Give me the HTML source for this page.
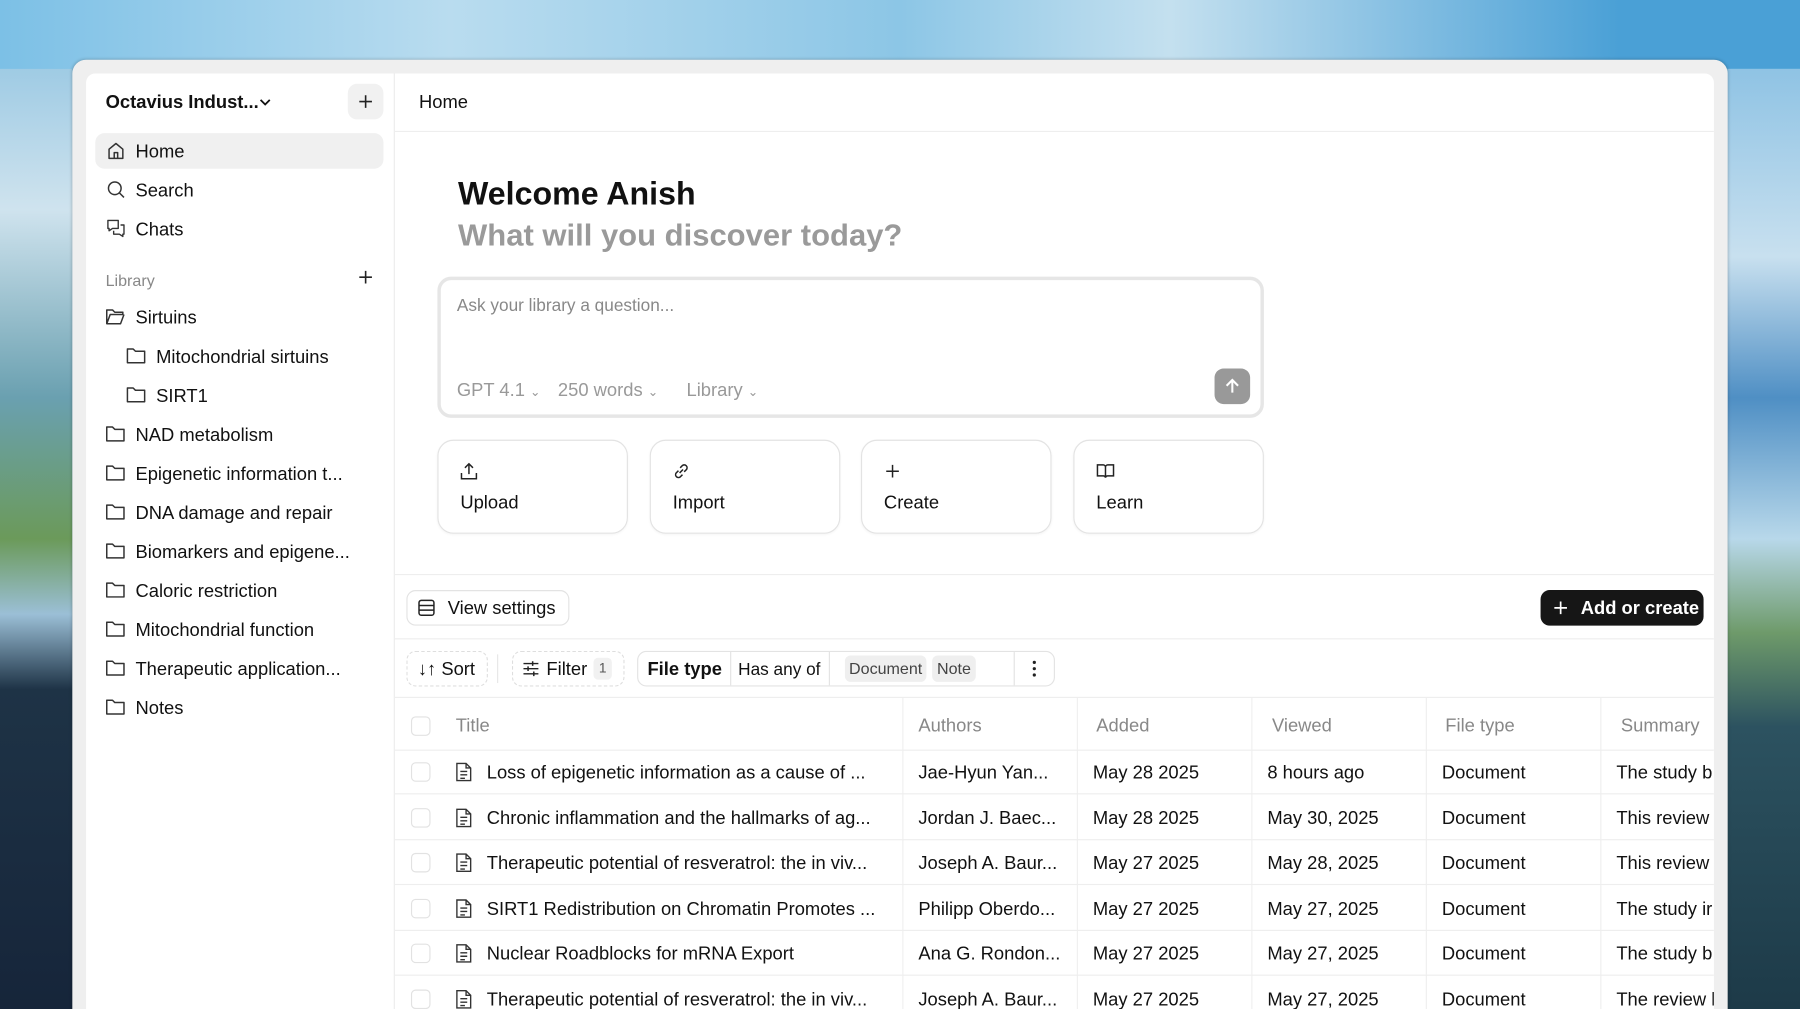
<!DOCTYPE html>
<html><head><meta charset="utf-8"><style>
*{box-sizing:border-box;margin:0;padding:0}
html,body{width:1800px;height:1009px;overflow:hidden}
body{font-family:"Liberation Sans",sans-serif;color:#111;background:#1a2c3c}
#w{position:absolute;left:0;top:0;width:1800px;height:1009px;overflow:hidden}
#s{position:absolute;left:0;top:0;width:1568px;height:879px;transform:scale(1.14796);transform-origin:0 0;overflow:hidden;
background:linear-gradient(180deg,#5aaedc 0%,#86c4e6 8%,#a9d2ea 14%,#6aa6cf 40%,#4f8fa0 55%,#2a4a5a 70%,#1a2c3c 100%);}
.bg{position:absolute}
.frame{position:absolute;left:63px;top:52px;width:1442px;height:840px;background:#efefef;border-radius:12px;box-shadow:0 0 3px rgba(0,0,0,.25)}
.app{position:absolute;left:75px;top:64px;width:1418px;height:815px;background:#fff;border-radius:8px 8px 0 0;overflow:hidden}
.side{position:absolute;left:0;top:0;width:269px;height:100%;border-right:1px solid #ececec}
.t{position:absolute;white-space:nowrap;font-size:16px;line-height:20px;margin-top:2px}
.ic{position:absolute}
svg{display:block}
.main{position:absolute;left:269px;top:0;right:0;height:100%}
.line{position:absolute;left:0;right:0;height:1px;background:#eeeeee}
.card{position:absolute;top:319px;width:166px;height:82px;border:1px solid #e3e3e3;border-radius:14px;box-shadow:0 1px 2px rgba(0,0,0,.04)}
.card .t{left:19px;top:43px}
.card .ic{left:19px;top:19px}
.cb{position:absolute;width:17px;height:17px;border:1px solid #e2e2e2;border-radius:4px}
.vl{position:absolute;top:544px;width:1px;height:300px;background:#efefef}
</style></head><body><div id="w"><div id="s">
<div class="bg" style="left:0;top:0;width:1568px;height:60px;background:linear-gradient(90deg,#7cc0e6,#b9dcef 25%,#8cc6e6 50%,#c4e0ef 65%,#4aa0d6 90%)"></div>
<div class="bg" style="left:0;top:60px;width:63px;height:819px;background:linear-gradient(180deg,#9fcbe4 0%,#cfe3ee 15%,#6aa0b0 35%,#6b9a5a 50%,#9bbfd6 58%,#1e3346 66%,#16253a 100%)"></div>
<div class="bg" style="left:1505px;top:60px;width:63px;height:819px;background:linear-gradient(180deg,#8fc3e4 0%,#c8e0ef 20%,#4f8fc4 35%,#b8d8ea 50%,#6e9a6a 60%,#2c5260 70%,#1d3a48 100%)"></div>
<div class="frame"></div>
<div class="app">
 <div class="side">
  <div class="t" style="left:17px;top:14px;font-weight:bold">Octavius Indust...</div>
  <div class="ic" style="left:151px;top:21px"><svg width="10" height="8"><path d="M1 2l4 4 4-4" stroke="#111" stroke-width="1.6" fill="none"/></svg></div>
  <div style="position:absolute;left:228px;top:9px;width:31px;height:31px;background:#f1f1f1;border-radius:8px"></div>
  <div class="ic" style="left:237px;top:18px"><svg width="13" height="13"><path d="M6.5 1v11M1 6.5h11" stroke="#222" stroke-width="1.4"/></svg></div>
  <div style="position:absolute;left:8px;top:52px;width:251px;height:31px;background:#f0f0f0;border-radius:8px"></div>
  <div class="ic" style="left:18px;top:59px"><svg width="16" height="17"><path d="M2 7l6-5 6 5v8H2z M6.5 15v-5h3v5" stroke="#333" stroke-width="1.3" fill="none" stroke-linejoin="round"/></svg></div>
  <div class="t" style="left:43px;top:57px">Home</div>
  <div class="ic" style="left:18px;top:93px"><svg width="16" height="17"><circle cx="7" cy="7" r="5.5" stroke="#333" stroke-width="1.3" fill="none"/><path d="M11 11l4 4" stroke="#333" stroke-width="1.3"/></svg></div>
  <div class="t" style="left:43px;top:91px">Search</div>
  <div class="ic" style="left:18px;top:127px"><svg width="16" height="17"><path d="M1 1h9v7H5l-3 2V8H1z M6 10v3h5l3 2v-2h1V5h-3" stroke="#333" stroke-width="1.2" fill="none" stroke-linejoin="round"/></svg></div>
  <div class="t" style="left:43px;top:125px">Chats</div>
  <div class="t" style="left:17px;top:168px;font-size:14px;color:#888">Library</div>
  <div class="ic" style="left:237px;top:171px"><svg width="13" height="13"><path d="M6.5 1v11M1 6.5h11" stroke="#222" stroke-width="1.4"/></svg></div>
  <div class="ic" style="left:17px;top:204px"><svg width="17" height="15"><path d="M1 2h5l2 2h7v2H4l-3 8z M1 14h12l3-8" stroke="#333" stroke-width="1.3" fill="none" stroke-linejoin="round"/></svg></div>
  <div class="t" style="left:43px;top:202px">Sirtuins</div>
  <div id="folders"></div>
 </div>
 <div class="main">
  <div class="t" style="left:21px;top:14px">Home</div>
  <div class="line" style="top:50px"></div>
  <div class="t" style="left:55px;top:86px;font-size:28px;line-height:34px;font-weight:bold">Welcome Anish</div>
  <div class="t" style="left:55px;top:122px;font-size:27px;line-height:34px;font-weight:bold;color:#9a9a9a">What will you discover today?</div>
  <div style="position:absolute;left:37px;top:177px;width:720px;height:123px;border:3px solid #e6e6e6;border-radius:12px"></div>
  <div class="t" style="left:54px;top:191px;font-size:15px;color:#888">Ask your library a question...</div>
  <div class="t" style="left:54px;top:265px;color:#999">GPT 4.1 <span style="font-size:11px">&#8964;</span></div>
  <div class="t" style="left:142px;top:265px;color:#999">250 words <span style="font-size:11px">&#8964;</span></div>
  <div class="t" style="left:254px;top:265px;color:#999">Library <span style="font-size:11px">&#8964;</span></div>
  <div style="position:absolute;left:714px;top:257px;width:31px;height:31px;background:#999;border-radius:8px"></div>
  <div class="ic" style="left:722px;top:265px"><svg width="15" height="15"><path d="M7.5 13V2M2.5 7l5-5 5 5" stroke="#fff" stroke-width="1.8" fill="none"/></svg></div>
  <div class="card" style="left:37px"><div class="ic"><svg width="15" height="15"><path d="M7.5 10V1M4 4.5l3.5-3.5 3.5 3.5M1 9v5h13V9" stroke="#222" stroke-width="1.3" fill="none"/></svg></div><div class="t">Upload</div></div>
  <div class="card" style="left:222px"><div class="ic"><svg width="15" height="15"><path d="M6 9l3-3M5 7L3 9a2.5 2.5 0 003.5 3.5l2-2M10 8l2-2A2.5 2.5 0 008.5 2.5l-2 2" stroke="#222" stroke-width="1.3" fill="none"/></svg></div><div class="t">Import</div></div>
  <div class="card" style="left:406px"><div class="ic"><svg width="15" height="15"><path d="M7.5 2v11M2 7.5h11" stroke="#222" stroke-width="1.3"/></svg></div><div class="t">Create</div></div>
  <div class="card" style="left:591px"><div class="ic"><svg width="16" height="15"><path d="M1 2h5a2 2 0 012 2v9a2 2 0 00-2-1.5H1zM15 2h-5a2 2 0 00-2 2v9a2 2 0 012-1.5h5z" stroke="#222" stroke-width="1.3" fill="none"/></svg></div><div class="t">Learn</div></div>
  <div class="line" style="top:436px"></div>
  <div style="position:absolute;left:10px;top:450px;width:142px;height:31px;border:1px solid #e3e3e3;border-radius:8px"></div>
  <div class="ic" style="left:20px;top:458px"><svg width="15" height="15"><rect x="1" y="1" width="13" height="13" rx="2" stroke="#222" stroke-width="1.3" fill="none"/><path d="M1 5.5h13M1 9.5h13" stroke="#222" stroke-width="1.3"/></svg></div>
  <div class="t" style="left:46px;top:455px">View settings</div>
  <div style="position:absolute;left:998px;top:450px;width:142px;height:31px;background:#161616;border-radius:8px"></div>
  <div class="ic" style="left:1009px;top:459px"><svg width="13" height="13"><path d="M6.5 1v11M1 6.5h11" stroke="#fff" stroke-width="1.5"/></svg></div>
  <div class="t" style="left:1033px;top:455px;color:#fff;font-weight:bold">Add or create</div>
  <div class="line" style="top:492px"></div>
  <div style="position:absolute;left:10px;top:503px;width:71px;height:31px;border:1px dashed #dedede;border-radius:8px"></div>
  <div class="t" style="left:20px;top:508px">&#8595;&#8593; Sort</div>
  <div style="position:absolute;left:89px;top:506px;width:1px;height:25px;background:#e6e6e6"></div>
  <div style="position:absolute;left:102px;top:503px;width:98px;height:31px;border:1px dashed #dedede;border-radius:8px"></div>
  <div class="ic" style="left:111px;top:511px"><svg width="15" height="15"><path d="M1 3h13M1 7.5h13M1 12h13" stroke="#222" stroke-width="1.2"/><path d="M9 1v4M5 5.5v4M10 10v4" stroke="#222" stroke-width="1.3"/></svg></div>
  <div class="t" style="left:132px;top:508px">Filter</div>
  <div style="position:absolute;left:173px;top:509px;width:16px;height:19px;background:#f1f1f1;border-radius:4px;font-size:12px;line-height:19px;text-align:center;color:#555">1</div>
  <div style="position:absolute;left:211px;top:503px;width:364px;height:31px;border:1px solid #e3e3e3;border-radius:8px"></div>
  <div class="t" style="left:220px;top:508px;font-weight:bold">File type</div>
  <div style="position:absolute;left:292px;top:504px;width:1px;height:29px;background:#e3e3e3"></div>
  <div class="t" style="left:299px;top:508px;font-size:15px">Has any of</div>
  <div style="position:absolute;left:378px;top:504px;width:1px;height:29px;background:#e3e3e3"></div>
  <div style="position:absolute;left:392px;top:507px;width:71px;height:23px;background:#efefef;border-radius:5px;font-size:14px;line-height:23px;text-align:center;color:#444">Document</div>
  <div style="position:absolute;left:468px;top:507px;width:38px;height:23px;background:#efefef;border-radius:5px;font-size:14px;line-height:23px;text-align:center;color:#444">Note</div>
  <div style="position:absolute;left:539px;top:504px;width:1px;height:29px;background:#e3e3e3"></div>
  <div class="ic" style="left:555px;top:511px"><svg width="4" height="15"><circle cx="2" cy="2" r="1.4" fill="#222"/><circle cx="2" cy="7.5" r="1.4" fill="#222"/><circle cx="2" cy="13" r="1.4" fill="#222"/></svg></div>
  <div class="line" style="top:543px"></div>
  <div class="vl" style="left:442px"></div><div class="vl" style="left:594px"></div><div class="vl" style="left:746px"></div><div class="vl" style="left:898px"></div><div class="vl" style="left:1050px"></div>
  <div class="cb" style="left:14px;top:560px"></div>
  <div class="t" style="left:53px;top:557px;color:#888">Title</div>
  <div class="t" style="left:456px;top:557px;color:#888">Authors</div>
  <div class="t" style="left:611px;top:557px;color:#888">Added</div>
  <div class="t" style="left:764px;top:557px;color:#888">Viewed</div>
  <div class="t" style="left:915px;top:557px;color:#888">File type</div>
  <div class="t" style="left:1068px;top:557px;color:#888">Summary</div>
  <div class="line" style="top:589px"></div>
  <div id="rows"></div>
 </div>
</div>
</div></div>
<script>
var f=[["Mitochondrial sirtuins",1],["SIRT1",1],["NAD metabolism",0],["Epigenetic information t...",0],["DNA damage and repair",0],["Biomarkers and epigene...",0],["Caloric restriction",0],["Mitochondrial function",0],["Therapeutic application...",0],["Notes",0]];
var h="";f.forEach(function(x,i){var y=236+i*34,dx=x[1]?18:0;
h+='<div class="ic" style="left:'+(17+dx)+'px;top:'+(y+2)+'px"><svg width="17" height="15"><path d="M1 2h5l2 2h8v10H1z" stroke="#333" stroke-width="1.3" fill="none" stroke-linejoin="round"/></svg></div><div class="t" style="left:'+(43+dx)+'px;top:'+y+'px">'+x[0]+'</div>';});
document.getElementById("folders").innerHTML=h;
var r=[["Loss of epigenetic information as a cause of ...","Jae-Hyun Yan...","May 28 2025","8 hours ago","The study b"],
["Chronic inflammation and the hallmarks of ag...","Jordan J. Baec...","May 28 2025","May 30, 2025","This review"],
["Therapeutic potential of resveratrol: the in viv...","Joseph A. Baur...","May 27 2025","May 28, 2025","This review"],
["SIRT1 Redistribution on Chromatin Promotes ...","Philipp Oberdo...","May 27 2025","May 27, 2025","The study ir"],
["Nuclear Roadblocks for mRNA Export","Ana G. Rondon...","May 27 2025","May 27, 2025","The study b"],
["Therapeutic potential of resveratrol: the in viv...","Joseph A. Baur...","May 27 2025","May 27, 2025","The review l"]];
h="";r.forEach(function(x,i){var c=608+i*39.5,y=c-10;
h+='<div class="cb" style="left:14px;top:'+(c-8)+'px"></div><div class="ic" style="left:53px;top:'+(c-8)+'px"><svg width="14" height="17"><path d="M1 1h8l4 4v11H1z M9 1v4h4 M4 8h6M4 11h6M4 14h4" stroke="#333" stroke-width="1.2" fill="none"/></svg></div>'+
'<div class="t" style="left:80px;top:'+y+'px">'+x[0]+'</div><div class="t" style="left:456px;top:'+y+'px">'+x[1]+'</div><div class="t" style="left:608px;top:'+y+'px">'+x[2]+'</div><div class="t" style="left:760px;top:'+y+'px">'+x[3]+'</div><div class="t" style="left:912px;top:'+y+'px">Document</div><div class="t" style="left:1064px;top:'+y+'px;width:85px;overflow:hidden">'+x[4]+'</div>'+
'<div class="line" style="top:'+(c+19)+'px"></div>';});
document.getElementById("rows").innerHTML=h;
</script>
</body></html>
